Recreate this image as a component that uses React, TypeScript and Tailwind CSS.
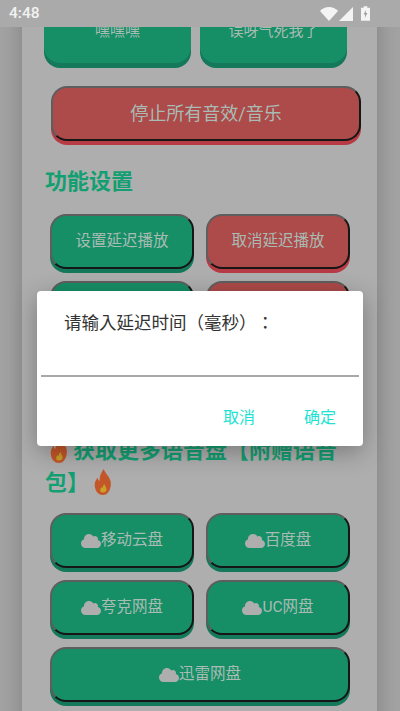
import { FaCloud } from 'react-icons/fa';

const cjk = 'font-["Roboto","Noto_Sans_CJK_JP",sans-serif]';

function Flame({ className = '' }: { className?: string }) {
  return (
    <svg viewBox="0 0 19 26" preserveAspectRatio="none" className={`inline-block w-[17px] h-[26px] align-[-5px] ${className}`}>
      <path d="M11 0c1 4 6 7 7.500 12 1.500 6-2 14-8.500 14S0 20 1 14c.6-2.500 2-4 3-5.500.3 2 1 3 2.200 3.500C6 7.500 8 3 11 0z" fill="#c4572a" />
      <path d="M11.500 15c.4 1.800 2.500 3 2.500 5.500 0 2-1.800 3-4 3s-3.500-1-3-3c.3-1.300 1-1.700 1.500-2.500.3.600.6.900 1.200 1.100-.1-1.500.6-2.900 1.800-4.100z" fill="#c9a227" />
    </svg>
  );
}

function PushButton({ label, red, cloud, className = '' }: { label?: string; red?: boolean; cloud?: boolean; className?: string }) {
  const colors = red
    ? 'bg-[#ad4a4a] shadow-[0_4px_0_#b73b44]'
    : 'bg-[#168e66] shadow-[0_4px_0_#14785a]';
  return (
    <div
      className={`h-[55px] rounded-[16px] border-2 border-t-[#5e5e5e] border-l-[#5e5e5e] border-r-[#161616] border-b-[#161616] flex items-center justify-center text-[15.5px] text-[#a9bcb4] ${colors} ${className}`}
    >
      {cloud && <FaCloud className="w-[20px] h-[20px] text-[#aeaeae]" />}
      {label}
    </div>
  );
}

export default function App() {
  return (
    <div className={`relative h-[711px] w-[400px] overflow-hidden bg-[#a3a3a3] [text-spacing-trim:space-all] ${cjk}`}>
      <div className="relative z-10 h-[27px] bg-[#aaaaaa] flex items-center pl-[9px]">
        <span className="text-[15.500px] font-medium text-[#f2f2f2]">4:48</span>
      </div>
      {/* status icons */}
      <div className="absolute z-10 top-[6px] left-[320px] flex items-center gap-[1px]">
        <svg viewBox="0 0 18 14" className="w-[18px] h-[14px]">
          <path d="M0 4C5-1.300 13-1.300 18 4L9 14z" fill="#f4f4f4" />
        </svg>
        <svg viewBox="0 0 14 14" className="w-[14px] h-[14px]">
          <path d="M0 14L14 0v14z" fill="#f4f4f4" />
        </svg>
        <svg viewBox="0 0 10 16" className="ml-[7px] w-[9px] h-[15px]">
          <path d="M3 0h4v1.500h3V16H0V1.500h3z" fill="#f4f4f4" />
          <path d="M5.500 4L3 9h1.700L4.300 13 7 7.500H5.300z" fill="#9a9a9a" />
        </svg>
      </div>

      <main className="mx-[22px] w-[355px] -mt-[27px] h-[760px] bg-[#aeaeae] shadow-[0_0_22px_rgba(0,0,0,0.22)]">
        <div className="flex gap-[9px] pl-[22px]">
          <div className="w-[147px] h-[63px] rounded-b-[16px] bg-[#168e66] shadow-[0_5px_0_#14785a] flex items-center justify-center text-[15px] text-[#a9bcb4]">嘿嘿嘿</div>
          <div className="w-[147px] h-[63px] rounded-b-[16px] bg-[#168e66] shadow-[0_5px_0_#14785a] flex items-center justify-center text-[15px] text-[#a9bcb4]">误呀气死我了</div>
        </div>

        <PushButton label="停止所有音效/音乐" red className="ml-[29px] mt-[23px] w-[310px] !text-[18px]" />

        <h2 className="ml-[23px] mt-[25px] text-[22px] leading-[32px] font-bold text-[#149f72]">功能设置</h2>

        <div className="mt-[16px] ml-[28px] grid grid-cols-[144px_144px] gap-x-[12px] gap-y-[12px]">
          <PushButton label="设置延迟播放" />
          <PushButton label="取消延迟播放" red />
          <PushButton />
          <PushButton red />
        </div>

        <h2 className="ml-[23px] mt-[99px] w-[300px] text-[22px] leading-[32px] font-bold text-[#149f72]">
          <Flame className="ml-[5px] mr-[6px]" />获取更多语音盘【附赠语音包】
          <Flame className="ml-[5px]" />
        </h2>

        <div className="mt-[14px] ml-[28px] grid grid-cols-[144px_144px] gap-x-[12px] gap-y-[12px]">
          <PushButton label="移动云盘" cloud />
          <PushButton label="百度盘" cloud />
          <PushButton label="夸克网盘" cloud />
          <PushButton label="UC网盘" cloud />
          <PushButton label="迅雷网盘" cloud className="col-span-2" />
        </div>
      </main>

      <div className="absolute left-[37px] top-[291px] w-[326px] h-[155px] rounded-[4px] bg-white shadow-[0_6px_24px_rgba(0,0,0,0.3)]">
        <p className="ml-[27px] mt-[20px] text-[17.500px] leading-[24px] text-[#333333]">请输入延迟时间（毫秒）：</p>
        <div className="mx-[4px] mt-[40px] h-[2px] bg-[#a8a8a8]" />
        <div className="mt-[29px] flex justify-end gap-[49px] pr-[27px] text-[16px] leading-[24px] text-[#1fe3d2]">
          <span>取消</span>
          <span>确定</span>
        </div>
      </div>
    </div>
  );
}
